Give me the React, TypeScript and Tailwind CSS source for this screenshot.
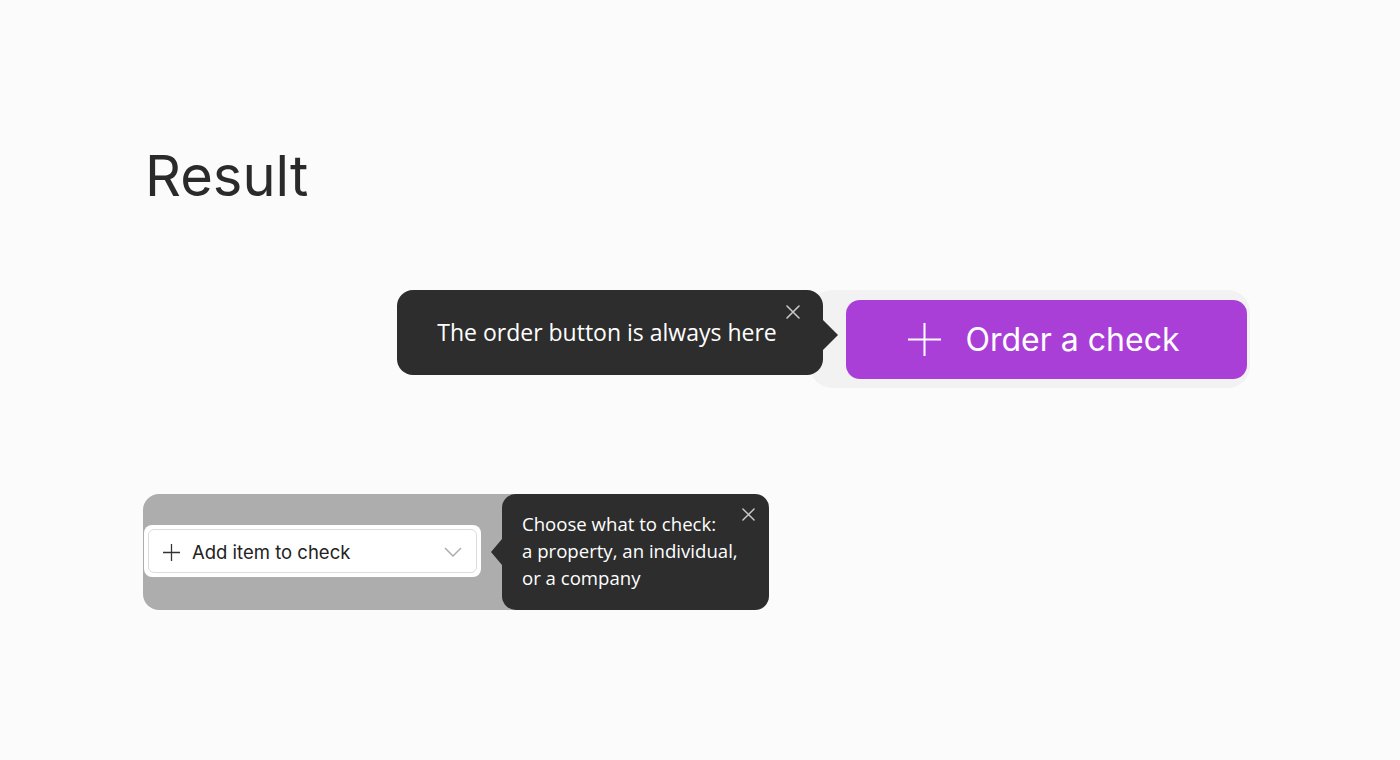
function PlusIcon({ size, stroke }: { size: number; stroke: number }) {
    return (
        <svg width={size} height={size} viewBox="0 0 24 24" fill="none" stroke="currentColor" strokeWidth={stroke} strokeLinecap="butt">
            <path d="M12 0v24M0 12h24" />
        </svg>
    );
}

function CloseIcon({ size, className }: { size: number; className?: string }) {
    return (
        <svg className={className} width={size} height={size} viewBox="0 0 14 14" fill="none" stroke="currentColor" strokeWidth="1.6" strokeLinecap="round">
            <path d="M1 1l12 12M13 1L1 13" />
        </svg>
    );
}

export default function App() {
    return (
        <div className="min-h-screen w-full bg-[#fbfbfb] text-[#2b2b2b]">
            <div className="pl-[145px] pt-[148px]">
                <h1 className="text-[56px] leading-none font-normal text-[#2a2a2a] font-['Inter',sans-serif]">Result</h1>
            </div>

            {/* order button with its hint */}
            <div className="flex items-start pl-[397px] mt-[86px]">
                <div className="relative z-10 w-[426px] h-[85px] rounded-[16px] bg-[#2d2d2d] flex items-center justify-center font-['Open_Sans',sans-serif]">
                    <span className="text-white text-[23px] leading-none pr-[6px]">The order button is always here</span>
                    <CloseIcon className="absolute right-[23px] top-[15px] text-[#c8c8c8]" size={14} />
                    <div className="absolute -right-[15px] top-[30px] w-0 h-0 border-y-[15px] border-y-transparent border-l-[15px] border-l-[#2d2d2d]" />
                </div>
                <div className="-ml-[13px] w-[440px] h-[98px] rounded-[22px] bg-[#f2f2f2] pl-[36px] pt-[10px] pr-[3px]">
                    <button className="w-[401px] h-[79px] rounded-[14px] bg-[#aa3fd8] text-white flex items-center justify-center gap-[25px] pr-[6px] font-['Inter',sans-serif]">
                        <PlusIcon size={33} stroke={1.5} />
                        <span className="text-[32px] leading-none font-normal">Order a check</span>
                    </button>
                </div>
            </div>

            {/* item picker with its hint */}
            <div className="flex items-start pl-[143px] mt-[106px]">
                <div className="w-[375px] h-[116px] rounded-l-[16px] bg-[#adadad] pt-[31px] pl-[1px]">
                    <div className="w-[337px] h-[52px] rounded-[8px] bg-white p-[4px]">
                        <div className="h-full rounded-[6px] border border-[#dcdcdc] flex items-center pl-[14px] pr-[14px] pt-[2px] font-['Inter',sans-serif]">
                            <span className="text-[#333]"><PlusIcon size={17} stroke={1.8} /></span>
                            <span className="ml-[12px] text-[18.5px] leading-none text-[#222]">Add item to check</span>
                            <svg className="ml-auto" width="18" height="10" viewBox="0 0 18 10" fill="none" stroke="#a8a8a8" strokeWidth="1.4">
                                <path d="M1 1l8 8 8-8" />
                            </svg>
                        </div>
                    </div>
                </div>
                <div className="relative -ml-[16px] w-[267px] h-[116px] rounded-[14px] bg-[#2d2d2d] pl-[20px] pt-[16px] font-['Open_Sans',sans-serif]">
                    <p className="text-white text-[18.6px] leading-[27px]">
                        Choose what to check:<br />
                        a property, an individual,<br />
                        or a company
                    </p>
                    <CloseIcon className="absolute right-[14px] top-[14px] text-[#c8c8c8]" size={13} />
                    <div className="absolute -left-[11px] top-[45px] w-0 h-0 border-y-[13px] border-y-transparent border-r-[11px] border-r-[#2d2d2d]" />
                </div>
            </div>
        </div>
    );
}
